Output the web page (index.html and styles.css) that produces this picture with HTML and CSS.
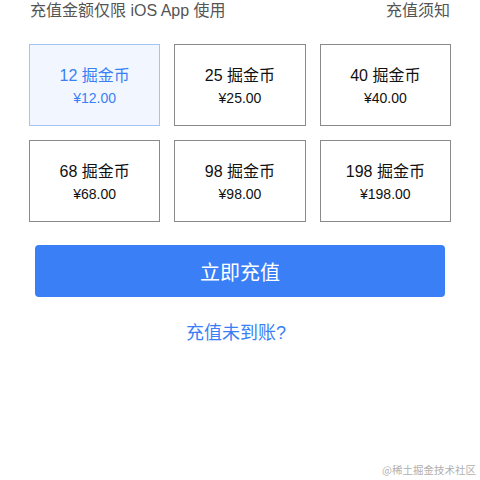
FILE: index.html
```html
<!DOCTYPE html>
<html lang="zh">
<head>
<meta charset="utf-8">
<link rel="stylesheet" href="styles.css">
</head>
<body>
<div class="page">
  <div class="header">
    <span class="note">充值金额仅限 iOS App 使用</span>
    <span class="rules">充值须知</span>
  </div>
  <div class="grid">
    <div class="card selected"><div class="amount">12 掘金币</div><div class="price">¥12.00</div></div>
    <div class="card"><div class="amount">25 掘金币</div><div class="price">¥25.00</div></div>
    <div class="card"><div class="amount">40 掘金币</div><div class="price">¥40.00</div></div>
    <div class="card"><div class="amount">68 掘金币</div><div class="price">¥68.00</div></div>
    <div class="card"><div class="amount">98 掘金币</div><div class="price">¥98.00</div></div>
    <div class="card"><div class="amount">198 掘金币</div><div class="price">¥198.00</div></div>
  </div>
  <button class="pay">立即充值</button>
  <div class="link">充值未到账?</div>
</div>
<div class="watermark">@稀土掘金技术社区</div>
</body>
</html>
```
FILE: styles.css
```css
html, body {
  margin: 0;
  padding: 0;
  background: #fff;
  width: 480px;
  height: 480px;
  overflow: hidden;
}
body {
  font-family: "Liberation Sans", "Noto Sans CJK SC", sans-serif;
  color: #111;
  position: relative;
}
.page {
  padding: 0 29px 0 29px;
}
.header {
  display: flex;
  justify-content: space-between;
  font-size: 16px;
  line-height: 22px;
  color: #555;
  padding: 0 1px;
  margin-top: 0;
  margin-bottom: 22px;
}
.grid {
  display: grid;
  grid-template-columns: repeat(3, 1fr);
  gap: 14px;
  width: 422px;
}
.card {
  height: 82px;
  box-sizing: border-box;
  border: 1px solid #8a8a8a;
  display: flex;
  flex-direction: column;
  align-items: center;
  justify-content: center;
  padding-top: 1px;
}
.card.selected {
  border-color: #a4c3f7;
  background: #f2f7ff;
  color: #3a7ff5;
}
.amount {
  font-size: 16px;
  line-height: 22px;
}
.price {
  font-size: 14px;
  line-height: 18px;
  margin-top: 2px;
}
.pay {
  display: block;
  margin: 23px 6px 0 6px;
  width: 410px;
  height: 52px;
  border: none;
  border-radius: 4px;
  background: #3a7ff6;
  color: #fff;
  font-family: "Liberation Sans", "Noto Sans CJK SC", sans-serif;
  font-size: 20px;
  padding: 0;
}
.link {
  margin-top: 24px;
  text-align: center;
  font-size: 18px;
  line-height: 24px;
  color: #3a7ff5;
  width: 414px;
}
.watermark {
  position: absolute;
  right: 4px;
  top: 462px;
  font-size: 10.5px;
  line-height: 16px;
  color: #b0b0b0;
  font-family: "Noto Sans CJK SC", serif;
}
```
